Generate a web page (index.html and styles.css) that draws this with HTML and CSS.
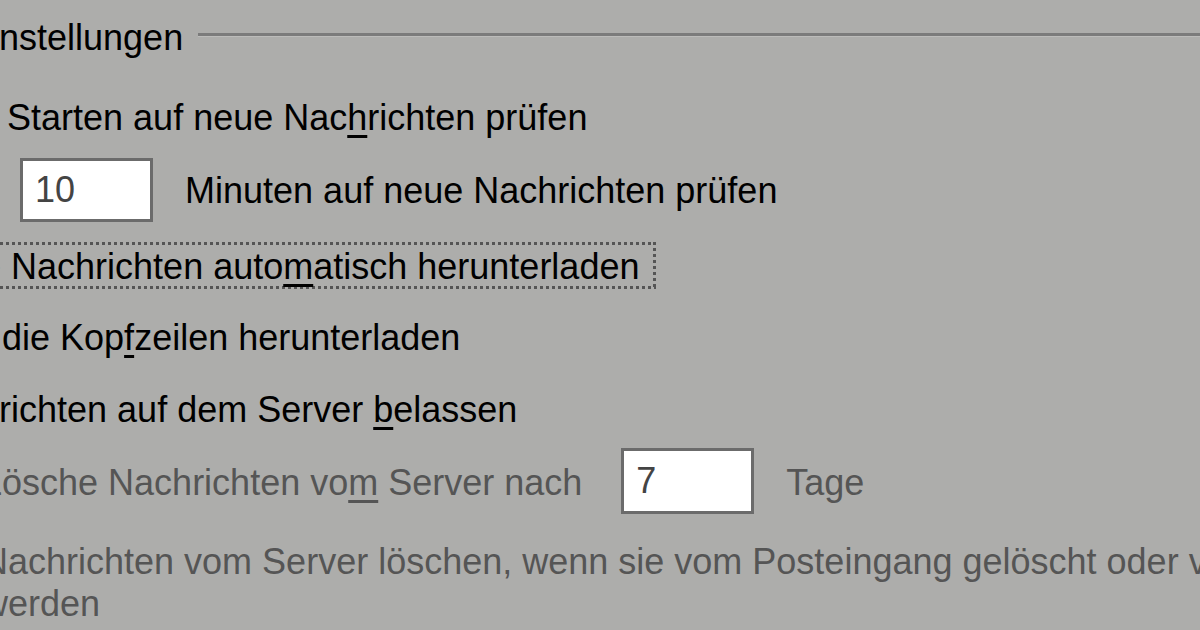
FILE: index.html
```html
<!DOCTYPE html>
<html lang="de">
<head>
<meta charset="utf-8">
<title>Servereinstellungen</title>
<link rel="stylesheet" href="styles.css">
</head>
<body>
<div class="panel">
  <div class="caption">
    <span class="caption-text">Einstellungen</span>
    <span class="caption-line"></span>
  </div>

  <div class="opt top r-start">
    <span class="cb"></span>
    <span class="label">Beim Starten auf neue Nac<u>h</u>richten prüfen</span>
  </div>

  <div class="opt top r-alle">
    <span class="cb cb-mid"></span>
    <span class="label mid">Alle</span>
    <span class="field field-alle">10</span>
    <span class="label mid after-alle">Minuten auf neue Nachrichten prüfen</span>
  </div>

  <div class="opt top r-neue">
    <span class="cb cb-focus"></span>
    <span class="label focus">Neue Nachrichten auto<u>m</u>atisch herunterladen</span>
  </div>

  <div class="opt lvl2 r-nur">
    <span class="cb"></span>
    <span class="label">Nur die Kop<u>f</u>zeilen herunterladen</span>
  </div>

  <div class="opt top r-bel">
    <span class="cb"></span>
    <span class="label">Nachrichten auf dem Server <u>b</u>elassen</span>
  </div>

  <div class="opt lvl3 r-losche dis">
    <span class="cb cb-low"></span>
    <span class="label low">Lösche Nachrichten vo<u>m</u> Server nach</span>
    <span class="field field-tage">7</span>
    <span class="label low after-tage">Tage</span>
  </div>

  <div class="opt lvl3 r-del dis">
    <span class="cb"></span>
    <span class="label wrap">Nachrichten vom Server löschen, wenn sie vom Posteingang gelöscht oder verschoben werden</span>
  </div>
</div>
</body>
</html>
```
FILE: styles.css
```css
html, body {
  margin: 0;
  padding: 0;
}

body {
  width: 1200px;
  height: 630px;
  overflow: hidden;
  background: #adadab;
  font-family: "Liberation Sans", Arial, sans-serif;
  font-size: 36px;
  color: #000;
}

.panel {
  margin-left: -160px;
  width: 1580px;
  padding-top: 16.5px;
  display: flex;
  flex-direction: column;
}

.caption {
  display: flex;
  align-items: flex-start;
  padding-left: 127px;
  height: 42px;
  line-height: 42px;
}

.caption-text {
  white-space: nowrap;
}

.caption-line {
  flex: 1;
  margin-top: 16.5px;
  margin-left: 15px;
  border-top: 3px solid #7b7b7b;
  border-bottom: 1px solid #bcbcba;
}

.opt {
  display: flex;
  align-items: flex-start;
  line-height: 42px;
}

.top  { padding-left: 18px; }
.lvl2 { padding-left: 37px; }
.lvl3 { padding-left: 85px; }

.cb {
  flex: none;
  width: 40px;
  height: 40px;
  margin-top: 1px;
  margin-right: 17px;
  box-sizing: border-box;
  background: #fff;
  border: 3px solid #6b6b6b;
}

.cb-mid   { margin-top: 12px; }
.cb-focus { margin-top: 4px; }
.cb-low   { margin-top: 14px; }

.label {
  white-space: nowrap;
}

.label.wrap {
  white-space: normal;
  flex: 1;
  min-width: 0;
}

.label.mid { margin-top: 11.5px; }
.label.low { margin-top: 13.5px; }

u {
  text-decoration: underline;
  text-decoration-thickness: 3px;
  text-underline-offset: 5px;
}

.dis {
  color: #555;
}

.field {
  flex: none;
  box-sizing: border-box;
  width: 133px;
  background: #fff;
  border: 3px solid #6b6b6b;
  color: #444;
  padding-left: 12px;
}

.field-alle {
  height: 64px;
  line-height: 58px;
  margin-left: 45px;
}

.field-tage {
  height: 66px;
  line-height: 60px;
  margin-left: 39px;
}

.after-alle { margin-left: 32px; }
.after-tage { margin-left: 32px; }

.focus {
  margin-left: -5px;
  padding: 6px 17px 3px 5px;
  line-height: 38px;
  background:
    linear-gradient(to right, #555 50%, transparent 50%) left top / 6px 3px repeat-x,
    linear-gradient(to right, #555 50%, transparent 50%) left bottom / 6px 3px repeat-x,
    linear-gradient(to bottom, #555 50%, transparent 50%) left top / 3px 6px repeat-y,
    linear-gradient(to bottom, #555 50%, transparent 50%) right top / 3px 6px repeat-y;
}

.r-start  { margin-top: 38px; }
.r-alle   { margin-top: 19.5px; }
.r-neue   { margin-top: 20px; }
.r-nur    { margin-top: 27.5px; }
.r-bel    { margin-top: 30px; }
.r-losche { margin-top: 17.5px; }
.r-del    { margin-top: 26.5px; }
```
